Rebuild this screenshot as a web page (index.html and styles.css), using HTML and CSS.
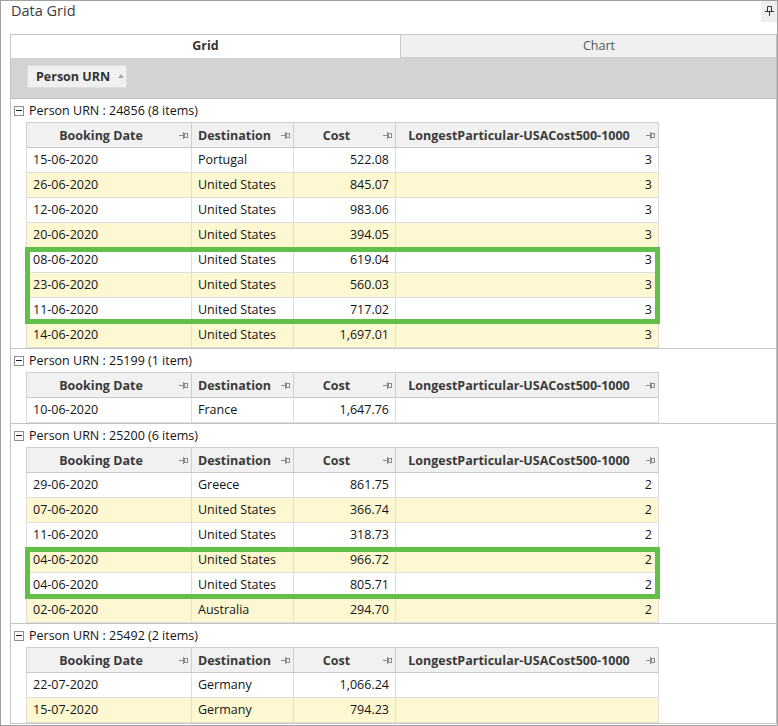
FILE: index.html
```html
<!DOCTYPE html>
<html>
<head>
<meta charset="utf-8">
<title>Data Grid</title>
<link rel="stylesheet" href="styles.css">
</head>
<body>
<div class="window">
  <div class="titlebar">
    <div class="title">Data Grid</div>
    <div class="pinbtn">
      <svg class="toppin" width="9" height="10" viewBox="0 0 9 10"><polyline points="2.5,5 2.5,0.5 6.5,0.5 6.5,5"/><line x1="0" y1="5.5" x2="9" y2="5.5"/><line x1="4.5" y1="5.5" x2="4.5" y2="10"/></svg>
    </div>
  </div>
  <div class="tabctl">
    <div class="tabs">
      <div class="tab active">Grid</div>
      <div class="tab other">Chart</div>
    </div>
    <div class="grouppanel">
      <div class="groupbtn"><span>Person URN</span><span class="tri"></span></div>
    </div>

    <div class="group first">
      <div class="grouprow"><span class="minus"></span>Person URN : 24856 (8 items)</div>
      <div class="gtable">
        <div class="hrow">
          <div class="hc c1"><span class="hl">Booking Date</span><svg class="pin" width="9" height="8" viewBox="0 0 9 8"><line x1="0" y1="4.5" x2="4" y2="4.5"/><line x1="4.5" y1="1" x2="4.5" y2="8"/><rect x="5.5" y="2.5" width="3" height="4"/></svg></div>
          <div class="hc c2"><span class="hl">Destination</span><svg class="pin" width="9" height="8" viewBox="0 0 9 8"><line x1="0" y1="4.5" x2="4" y2="4.5"/><line x1="4.5" y1="1" x2="4.5" y2="8"/><rect x="5.5" y="2.5" width="3" height="4"/></svg></div>
          <div class="hc c3"><span class="hl">Cost</span><svg class="pin" width="9" height="8" viewBox="0 0 9 8"><line x1="0" y1="4.5" x2="4" y2="4.5"/><line x1="4.5" y1="1" x2="4.5" y2="8"/><rect x="5.5" y="2.5" width="3" height="4"/></svg></div>
          <div class="hc c4"><span class="hl">LongestParticular-USACost500-1000</span><svg class="pin" width="9" height="8" viewBox="0 0 9 8"><line x1="0" y1="4.5" x2="4" y2="4.5"/><line x1="4.5" y1="1" x2="4.5" y2="8"/><rect x="5.5" y="2.5" width="3" height="4"/></svg></div>
        </div>
        <div class="drow"><div class="dc c1">15-06-2020</div><div class="dc c2">Portugal</div><div class="dc c3 r">522.08</div><div class="dc c4 r">3</div></div>
        <div class="drow alt"><div class="dc c1">26-06-2020</div><div class="dc c2">United States</div><div class="dc c3 r">845.07</div><div class="dc c4 r">3</div></div>
        <div class="drow"><div class="dc c1">12-06-2020</div><div class="dc c2">United States</div><div class="dc c3 r">983.06</div><div class="dc c4 r">3</div></div>
        <div class="drow alt"><div class="dc c1">20-06-2020</div><div class="dc c2">United States</div><div class="dc c3 r">394.05</div><div class="dc c4 r">3</div></div>
        <div class="hlbox">
          <div class="drow"><div class="dc c1">08-06-2020</div><div class="dc c2">United States</div><div class="dc c3 r">619.04</div><div class="dc c4 r">3</div></div>
          <div class="drow alt"><div class="dc c1">23-06-2020</div><div class="dc c2">United States</div><div class="dc c3 r">560.03</div><div class="dc c4 r">3</div></div>
          <div class="drow"><div class="dc c1">11-06-2020</div><div class="dc c2">United States</div><div class="dc c3 r">717.02</div><div class="dc c4 r">3</div></div>
        </div>
        <div class="drow alt"><div class="dc c1">14-06-2020</div><div class="dc c2">United States</div><div class="dc c3 r">1,697.01</div><div class="dc c4 r">3</div></div>
      </div>
    </div>

    <div class="group">
      <div class="grouprow"><span class="minus"></span>Person URN : 25199 (1 item)</div>
      <div class="gtable">
        <div class="hrow">
          <div class="hc c1"><span class="hl">Booking Date</span><svg class="pin" width="9" height="8" viewBox="0 0 9 8"><line x1="0" y1="4.5" x2="4" y2="4.5"/><line x1="4.5" y1="1" x2="4.5" y2="8"/><rect x="5.5" y="2.5" width="3" height="4"/></svg></div>
          <div class="hc c2"><span class="hl">Destination</span><svg class="pin" width="9" height="8" viewBox="0 0 9 8"><line x1="0" y1="4.5" x2="4" y2="4.5"/><line x1="4.5" y1="1" x2="4.5" y2="8"/><rect x="5.5" y="2.5" width="3" height="4"/></svg></div>
          <div class="hc c3"><span class="hl">Cost</span><svg class="pin" width="9" height="8" viewBox="0 0 9 8"><line x1="0" y1="4.5" x2="4" y2="4.5"/><line x1="4.5" y1="1" x2="4.5" y2="8"/><rect x="5.5" y="2.5" width="3" height="4"/></svg></div>
          <div class="hc c4"><span class="hl">LongestParticular-USACost500-1000</span><svg class="pin" width="9" height="8" viewBox="0 0 9 8"><line x1="0" y1="4.5" x2="4" y2="4.5"/><line x1="4.5" y1="1" x2="4.5" y2="8"/><rect x="5.5" y="2.5" width="3" height="4"/></svg></div>
        </div>
        <div class="drow"><div class="dc c1">10-06-2020</div><div class="dc c2">France</div><div class="dc c3 r">1,647.76</div><div class="dc c4 r"></div></div>
      </div>
    </div>

    <div class="group">
      <div class="grouprow"><span class="minus"></span>Person URN : 25200 (6 items)</div>
      <div class="gtable">
        <div class="hrow">
          <div class="hc c1"><span class="hl">Booking Date</span><svg class="pin" width="9" height="8" viewBox="0 0 9 8"><line x1="0" y1="4.5" x2="4" y2="4.5"/><line x1="4.5" y1="1" x2="4.5" y2="8"/><rect x="5.5" y="2.5" width="3" height="4"/></svg></div>
          <div class="hc c2"><span class="hl">Destination</span><svg class="pin" width="9" height="8" viewBox="0 0 9 8"><line x1="0" y1="4.5" x2="4" y2="4.5"/><line x1="4.5" y1="1" x2="4.5" y2="8"/><rect x="5.5" y="2.5" width="3" height="4"/></svg></div>
          <div class="hc c3"><span class="hl">Cost</span><svg class="pin" width="9" height="8" viewBox="0 0 9 8"><line x1="0" y1="4.5" x2="4" y2="4.5"/><line x1="4.5" y1="1" x2="4.5" y2="8"/><rect x="5.5" y="2.5" width="3" height="4"/></svg></div>
          <div class="hc c4"><span class="hl">LongestParticular-USACost500-1000</span><svg class="pin" width="9" height="8" viewBox="0 0 9 8"><line x1="0" y1="4.5" x2="4" y2="4.5"/><line x1="4.5" y1="1" x2="4.5" y2="8"/><rect x="5.5" y="2.5" width="3" height="4"/></svg></div>
        </div>
        <div class="drow"><div class="dc c1">29-06-2020</div><div class="dc c2">Greece</div><div class="dc c3 r">861.75</div><div class="dc c4 r">2</div></div>
        <div class="drow alt"><div class="dc c1">07-06-2020</div><div class="dc c2">United States</div><div class="dc c3 r">366.74</div><div class="dc c4 r">2</div></div>
        <div class="drow"><div class="dc c1">11-06-2020</div><div class="dc c2">United States</div><div class="dc c3 r">318.73</div><div class="dc c4 r">2</div></div>
        <div class="hlbox">
          <div class="drow alt"><div class="dc c1">04-06-2020</div><div class="dc c2">United States</div><div class="dc c3 r">966.72</div><div class="dc c4 r">2</div></div>
          <div class="drow"><div class="dc c1">04-06-2020</div><div class="dc c2">United States</div><div class="dc c3 r">805.71</div><div class="dc c4 r">2</div></div>
        </div>
        <div class="drow alt"><div class="dc c1">02-06-2020</div><div class="dc c2">Australia</div><div class="dc c3 r">294.70</div><div class="dc c4 r">2</div></div>
      </div>
    </div>

    <div class="group">
      <div class="grouprow"><span class="minus"></span>Person URN : 25492 (2 items)</div>
      <div class="gtable">
        <div class="hrow">
          <div class="hc c1"><span class="hl">Booking Date</span><svg class="pin" width="9" height="8" viewBox="0 0 9 8"><line x1="0" y1="4.5" x2="4" y2="4.5"/><line x1="4.5" y1="1" x2="4.5" y2="8"/><rect x="5.5" y="2.5" width="3" height="4"/></svg></div>
          <div class="hc c2"><span class="hl">Destination</span><svg class="pin" width="9" height="8" viewBox="0 0 9 8"><line x1="0" y1="4.5" x2="4" y2="4.5"/><line x1="4.5" y1="1" x2="4.5" y2="8"/><rect x="5.5" y="2.5" width="3" height="4"/></svg></div>
          <div class="hc c3"><span class="hl">Cost</span><svg class="pin" width="9" height="8" viewBox="0 0 9 8"><line x1="0" y1="4.5" x2="4" y2="4.5"/><line x1="4.5" y1="1" x2="4.5" y2="8"/><rect x="5.5" y="2.5" width="3" height="4"/></svg></div>
          <div class="hc c4"><span class="hl">LongestParticular-USACost500-1000</span><svg class="pin" width="9" height="8" viewBox="0 0 9 8"><line x1="0" y1="4.5" x2="4" y2="4.5"/><line x1="4.5" y1="1" x2="4.5" y2="8"/><rect x="5.5" y="2.5" width="3" height="4"/></svg></div>
        </div>
        <div class="drow"><div class="dc c1">22-07-2020</div><div class="dc c2">Germany</div><div class="dc c3 r">1,066.24</div><div class="dc c4 r"></div></div>
        <div class="drow alt"><div class="dc c1">15-07-2020</div><div class="dc c2">Germany</div><div class="dc c3 r">794.23</div><div class="dc c4 r"></div></div>
      </div>
    </div>
  </div>
</div>
</body>
</html>
```

FILE: styles.css
```css
* { box-sizing: border-box; }
html, body { margin: 0; padding: 0; background: #fff; }
body {
  font-family: "Open Sans", "Segoe UI", sans-serif;
  font-size: 12.5px;
  color: #141414;
}
.window {
  width: 778px;
  height: 726px;
  border: 1px solid #a0a0a0;
  display: flex;
  flex-direction: column;
  overflow: hidden;
  background: #fff;
}
.titlebar {
  height: 33px;
  flex: none;
  display: flex;
  justify-content: space-between;
  align-items: flex-start;
}
.title {
  font-size: 14.5px;
  line-height: 20px;
  color: #3c3c3c;
  padding-left: 10px;
}
.pinbtn {
  width: 16px;
  height: 22px;
  background: #efefef;
  display: flex;
  align-items: center;
  justify-content: center;
  margin-top: -1px;
}
.toppin {
  fill: none;
  stroke: #333;
  stroke-width: 1;
}
.tabctl {
  margin-left: 9px;
  height: 690px;
  flex: none;
  border-left: 1px solid #c4c4c4;
  border-right: 1px solid #c4c4c4;
  border-bottom: 1px solid #c4c4c4;
  overflow: hidden;
  display: flex;
  flex-direction: column;
}
.tabs {
  height: 24px;
  flex: none;
  display: flex;
}
.tab {
  height: 24px;
  border-top: 1px solid #c8c8c8;
  text-align: center;
  line-height: 22px;
  flex: none;
}
.tab.active {
  width: 389px;
  background: #fff;
  font-weight: bold;
  color: #333;
}
.tab.other {
  width: 397px;
  background: #f0f0f0;
  border-left: 1px solid #c8c8c8;
  border-bottom: 1px solid #c8c8c8;
  color: #555;
}
.grouppanel {
  height: 41px;
  flex: none;
  background: #d3d3d3;
  border-bottom: 1px solid #bdbdbd;
  padding: 7px 0 0 16px;
}
.groupbtn {
  width: 100px;
  height: 23px;
  background: #f0f0f0;
  border: 1px solid #dcdcdc;
  display: flex;
  align-items: center;
  padding-left: 8px;
  font-weight: bold;
  color: #333;
}
.tri {
  margin-left: 8px;
  width: 0;
  height: 0;
  border-left: 3.5px solid transparent;
  border-right: 3.5px solid transparent;
  border-bottom: 4px solid #a6a6a6;
  margin-top: -1px;
}
.group {
  flex: none;
  border-top: 1px solid #c3c3c3;
}
.group.first { border-top: none; }
.grouprow {
  height: 23px;
  display: flex;
  align-items: center;
  padding-left: 3px;
  color: #141414;
}
.minus {
  width: 10px;
  height: 10px;
  border: 1px solid #8e8e8e;
  background: #fff;
  margin-right: 5px;
  position: relative;
  flex: none;
}
.minus::after {
  content: "";
  position: absolute;
  left: 1px;
  right: 1px;
  top: 3.5px;
  height: 1px;
  background: #222;
}
.gtable {
  margin-left: 15px;
  width: 633px;
}
.hrow {
  display: flex;
  height: 26px;
  border-top: 1px solid #cdcdcd;
  border-bottom: 1px solid #c8c8c8;
}
.hc {
  height: 24px;
  background: #f1f1f1;
  border-right: 1px solid #d0d0d0;
  display: flex;
  align-items: center;
  padding-right: 3px;
  font-weight: bold;
  color: #3a3a3a;
  flex: none;
  overflow: hidden;
  white-space: nowrap;
}
.hc.c1 { border-left: 1px solid #d0d0d0; }
.hl {
  flex: 1;
  text-align: center;
  overflow: hidden;
}
.pin {
  flex: none;
  margin-left: 4px;
  stroke: #8a8a8a;
  fill: none;
  stroke-width: 1;
}
.c1 { width: 166px; }
.c2 { width: 102px; }
.c3 { width: 102px; }
.c4 { width: 263px; }
.drow {
  display: flex;
  height: 25px;
}
.dc {
  height: 25px;
  line-height: 24px;
  border-right: 1px solid #dedede;
  border-bottom: 1px solid #dedede;
  padding: 0 6px;
  background: #fff;
  white-space: nowrap;
  flex: none;
}
.dc.c1 { border-left: 1px solid #dedede; }
.drow.alt .dc { background: #fdf8d2; }
.dc.r { text-align: right; }
.hlbox {
  outline: 5px solid #62bf4a;
  outline-offset: -4px;
}
```
